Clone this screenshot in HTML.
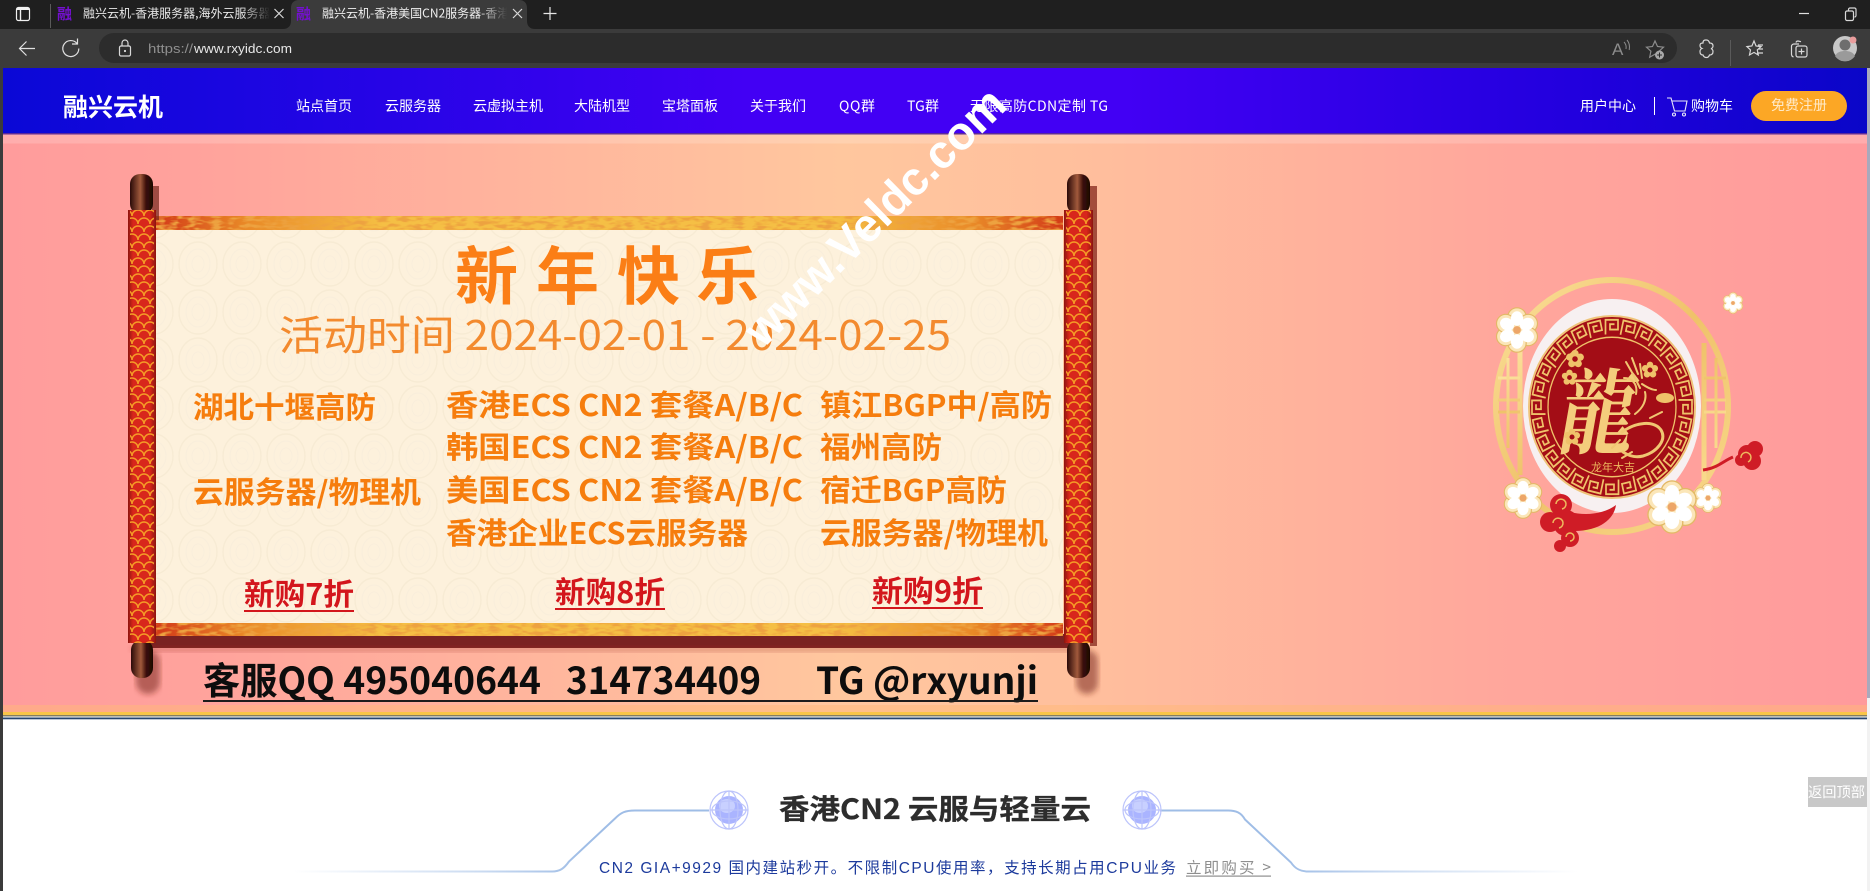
<!DOCTYPE html>
<html lang="zh"><head><meta charset="utf-8"><title>融兴云机</title>
<style>
html,body{margin:0;padding:0;background:#fff;width:1870px;height:891px;overflow:hidden}
svg{position:absolute;left:0;top:0;display:block;filter:blur(.3px)}
text{font-family:"Liberation Sans","Noto Sans CJK SC",sans-serif}
.n{font-family:"Noto Sans CJK SC","Liberation Sans",sans-serif}
.nav{fill:#fff;font-size:14px;font-family:"Noto Sans CJK SC",sans-serif}
.o{fill:#f67d10;font-weight:700;font-size:30px;font-family:"Noto Sans CJK SC",sans-serif}
.r{fill:#d3131d;font-weight:700;font-size:30px;font-family:"Noto Sans CJK SC",sans-serif}
.k{fill:#0a0a0a;font-weight:700;font-size:37px;font-family:"Noto Sans CJK SC",sans-serif}
.ic{fill:none;stroke:#d8d8d8;stroke-width:1.2}
</style></head><body>
<svg width="1870" height="891" viewBox="0 0 1870 891" xmlns="http://www.w3.org/2000/svg">
<defs>
<linearGradient id="hd" x1="0" x2="1" y1="0" y2="0"><stop offset="0" stop-color="#0a08d6"/><stop offset=".12" stop-color="#1a06e0"/><stop offset=".4" stop-color="#4200f4"/><stop offset=".6" stop-color="#4200f4"/><stop offset=".85" stop-color="#2100dd"/><stop offset="1" stop-color="#0a06c8"/></linearGradient>
<linearGradient id="bn" x1="0" x2="1" y1="0" y2="0"><stop offset="0" stop-color="#ff9c9c"/><stop offset=".1" stop-color="#ffa29c"/><stop offset=".45" stop-color="#ffc79e"/><stop offset=".58" stop-color="#ffbf9d"/><stop offset=".8" stop-color="#ffa79c"/><stop offset="1" stop-color="#ff9a9c"/></linearGradient>
<linearGradient id="gl" x1="0" x2="1" y1="0" y2="0"><stop offset="0" stop-color="#9fbde6" stop-opacity="0"/><stop offset=".45" stop-color="#9fbde6" stop-opacity=".55"/><stop offset=".7" stop-color="#9fbde6"/></linearGradient>
<linearGradient id="gr" x1="0" x2="1" y1="0" y2="0"><stop offset=".3" stop-color="#9fbde6"/><stop offset=".55" stop-color="#9fbde6" stop-opacity=".55"/><stop offset="1" stop-color="#9fbde6" stop-opacity="0"/></linearGradient>
<linearGradient id="band" x1="0" x2="1" y1="0" y2="0"><stop offset="0" stop-color="#d33a18"/><stop offset=".1" stop-color="#e98a28"/><stop offset=".25" stop-color="#f5bf44"/><stop offset=".75" stop-color="#f5bf44"/><stop offset=".9" stop-color="#e98a28"/><stop offset="1" stop-color="#d33a18"/></linearGradient>
<linearGradient id="rod" x1="0" x2="1" y1="0" y2="0"><stop offset="0" stop-color="#8c1610"/><stop offset=".18" stop-color="#d8261a"/><stop offset=".78" stop-color="#d8261a"/><stop offset="1" stop-color="#8c1610"/></linearGradient>
<linearGradient id="cap" x1="0" x2="1" y1="0" y2="0"><stop offset="0" stop-color="#2a0a08"/><stop offset=".45" stop-color="#a15a3c"/><stop offset=".7" stop-color="#3a0d08"/><stop offset="1" stop-color="#1c0605"/></linearGradient>
<linearGradient id="gold" x1="0" x2="1" y1="0" y2="1"><stop offset="0" stop-color="#fbe09a"/><stop offset=".5" stop-color="#efc26a"/><stop offset="1" stop-color="#f9d98c"/></linearGradient>
<linearGradient id="fade" x1="0" x2="1"><stop offset="0" stop-color="#fff"/><stop offset=".85" stop-color="#fff"/><stop offset="1" stop-color="#fff" stop-opacity="0"/></linearGradient>
<mask id="m1"><rect x="80" y="0" width="190" height="29" fill="url(#fade)"/></mask>
<mask id="m2"><rect x="320" y="0" width="187" height="29" fill="url(#fade)"/></mask>
<pattern id="paper" width="44" height="48" patternUnits="userSpaceOnUse"><ellipse cx="22" cy="24" rx="19" ry="22" fill="none" stroke="#f7ebd4" stroke-width="1.4"/><ellipse cx="22" cy="24" rx="12" ry="15" fill="none" stroke="#f9eedb" stroke-width="1.2"/><ellipse cx="22" cy="24" rx="6" ry="8" fill="none" stroke="#f9eedb"/></pattern>
<pattern id="wave" width="12" height="16" patternUnits="userSpaceOnUse"><path d="M0 8a6 6 0 0 1 12 0M-6 16a6 6 0 0 1 12 0M6 16a6 6 0 0 1 12 0" fill="none" stroke="#f49a28" stroke-width="1.500"/></pattern>
<filter id="noise" x="0" y="0" width="100%" height="100%"><feTurbulence type="fractalNoise" baseFrequency=".09 .28" numOctaves="2" seed="4"/><feColorMatrix values="0 0 0 0 .85  0 0 0 0 .36  0 0 0 0 .05  0 0 0 4 -1.7"/></filter>
<filter id="b1"><feGaussianBlur stdDeviation=".3"/></filter>
<filter id="b3"><feGaussianBlur stdDeviation="3"/></filter>
<radialGradient id="pt"><stop offset="0" stop-color="#fbe6cc"/><stop offset=".6" stop-color="#fff"/><stop offset="1" stop-color="#fff"/></radialGradient>
<symbol id="fl" viewBox="-30 -30 60 60"><g fill="#fbe6b8" stroke="#e3b866" stroke-width="1.500"><circle cx="0" cy="-17" r="12"/><circle cx="14.700" cy="-8.500" r="12"/><circle cx="14.700" cy="8.500" r="12"/><circle cx="0" cy="17" r="12"/><circle cx="-14.700" cy="8.500" r="12"/><circle cx="-14.700" cy="-8.500" r="12"/></g><circle r="16" fill="#fbe6b8"/><g fill="#fff"><ellipse cx="0" cy="-15" rx="8" ry="9.500"/><ellipse cx="13" cy="-7.500" rx="8" ry="9.500" transform="rotate(60 13 -7.500)"/><ellipse cx="13" cy="7.500" rx="8" ry="9.500" transform="rotate(120 13 7.500)"/><ellipse cx="0" cy="15" rx="8" ry="9.500"/><ellipse cx="-13" cy="7.500" rx="8" ry="9.500" transform="rotate(60 -13 7.500)"/><ellipse cx="-13" cy="-7.500" rx="8" ry="9.500" transform="rotate(120 -13 -7.500)"/></g><circle r="5" fill="#eda668"/></symbol>
<symbol id="sf" viewBox="-12 -12 24 24"><g fill="#efc26a"><circle cy="-6" r="4"/><circle cx="5.700" cy="-2" r="4"/><circle cx="3.500" cy="5" r="4"/><circle cx="-3.500" cy="5" r="4"/><circle cx="-5.700" cy="-2" r="4"/></g><circle r="3" fill="#a30d13"/></symbol>
<symbol id="globe" viewBox="-20 -20 40 40"><circle r="14" fill="#aab4ff"/><ellipse cx="-2" cy="-4" rx="8" ry="7" fill="#c8d0ff"/><g fill="none" stroke="#bcc4fb" stroke-width="1.200"><ellipse rx="19" ry="19"/><ellipse rx="17" ry="9"/><ellipse rx="9" ry="19"/><path d="M-19 0H19M0-19V19"/></g></symbol>
<path id="km" d="M-6.500-66.500V-80H6V-71H-2V-76H2.500" fill="none" stroke="#efc26a" stroke-width="1.700"/>
</defs>

<!-- browser chrome -->
<rect width="1870" height="29" fill="#1f1f1f"/>
<rect y="29" width="1870" height="39" fill="#3b3b3b"/>
<rect x="0" y="68" width="3" height="823" fill="#3b3b3b"/>
<path d="M283 29c5 0 8-3 8-8V8c0-5 3-8 8-8h220c5 0 8 3 8 8v13c0 5 3 8 8 8z" fill="#3b3b3b"/>
<rect x="99" y="33" width="1578" height="30" rx="15" fill="#2c2c2c"/>
<g fill="none" stroke="#f0f0f0" stroke-width="1.200"><rect x="16.500" y="7.500" width="13" height="13" rx="2"/><path d="M16.500 9h13" stroke-width="2"/><path d="M20.500 8v12" stroke-width="1.400"/></g>
<path d="M50.500 4v24" stroke="#5a5a5a"/>
<text x="57" y="19" font-size="15" font-weight="700" fill="#7410d0" class="n">融</text>
<g mask="url(#m1)"><text x="83" y="17.500" font-size="12" fill="#e8e8e8" class="n">融兴云机-香港服务器,海外云服务器服务器</text></g>
<path d="M274.500 9l9 9M283.500 9l-9 9" stroke="#d8d8d8" stroke-width="1.200"/>
<text x="296" y="19" font-size="15" font-weight="700" fill="#7410d0" class="n">融</text>
<g mask="url(#m2)"><text x="322" y="17.500" font-size="12" fill="#f0f0f0" class="n">融兴云机-香港美国CN2服务器-香港服务器</text></g>
<path d="M513 9l9 9M522 9l-9 9" stroke="#d8d8d8" stroke-width="1.200"/>
<path d="M550 7v13M543.500 13.500h13" stroke="#e6e6e6" stroke-width="1.200"/>
<path d="M1799 13.500h10" stroke="#e0e0e0" stroke-width="1.200"/>
<g class="ic"><rect x="1845.500" y="11" width="8" height="9.500" rx="1.500"/><path d="M1848.500 10.500V9.500a1.500 1.500 0 0 1 1.500-1.500h4.500a1.500 1.500 0 0 1 1.500 1.500v6a1.500 1.500 0 0 1-1.500 1.500"/></g>
<path d="M35 48.500H20M26.500 41.500l-7 7 7 7" fill="none" stroke="#e0e0e0" stroke-width="1.200"/>
<path d="M77 43.500a8 8 0 1 0 1.800 5M77.500 38.500v5.500h-5.500" fill="none" stroke="#e0e0e0" stroke-width="1.200"/>
<g class="ic"><rect x="119.500" y="46" width="11" height="10" rx="1.500"/><path d="M122 46v-3a3 3 0 0 1 6 0v3"/></g><circle cx="125" cy="51" r="1.100" fill="#ddd"/>
<text x="148" y="53" font-size="13" fill="#8f8f8f" textLength="45" lengthAdjust="spacingAndGlyphs">https://</text>
<text x="194" y="53" font-size="13" fill="#e8e8e8" textLength="98" lengthAdjust="spacingAndGlyphs">www.rxyidc.com</text>
<text x="1612" y="55" font-size="17" fill="#8c8c8c" font-weight="400">A</text>
<path d="M1624 42c2 2 2.500 4 2 7M1627 40c2.500 3 3 6 2.200 10" fill="none" stroke="#8c8c8c"/>
<path d="M1655 41l2.500 5.500 6 .7-4.400 4 1.200 6-5.300-3-5.300 3 1.200-6-4.400-4 6-.7z" fill="none" stroke="#8c8c8c" stroke-width="1.200"/>
<circle cx="1659.500" cy="55" r="4.500" fill="#a8a8a8"/><path d="M1659.500 52.500v5M1657 55h5" stroke="#2c2c2c"/>
<path class="ic" d="M1703 43c0-2 1-3 2.500-3h1c1.500 0 2.500 1 3 3 2 0 3.500 1 3.500 3 0 1.500-1 2.500-2 2.500 1 .5 2 1.500 2 3 0 2.500-1.500 3.500-3.500 3.500-.5 1.500-1.500 2.500-3 2.500s-3-1-3.500-2.500c-2 0-3-1.500-3-3.500 0-1.500.7-2.500 2-3-1.300-.5-2-1.500-2-3 0-1.500.5-2.500 3-2.500z"/>
<path d="M1730.500 40v26" stroke="#5a5a5a"/>
<path class="ic" d="M1754 41l2 5 5 .6-3.700 3.400 1 5-4.300-2.600-4.500 2.600 1-5-3.600-3.400 5-.6zM1758 45h5M1759 49h4M1757 53h6"/>
<g class="ic"><path d="M1799 44h-5a2.500 2.500 0 0 0-2.500 2.500V54a3 3 0 0 0 2 3"/><path d="M1796 42.500a2 2 0 0 1 2-1.500l3 .7"/><rect x="1796" y="46" width="11" height="11" rx="2"/><path d="M1801.500 48.500v6M1798.500 51.500h6"/></g>
<circle cx="1845" cy="48" r="12" fill="#c8c8c8"/><circle cx="1845" cy="45" r="5.500" fill="#6e6e6e"/><path d="M1835 56c2-4 6-5 10-5s8 1 10 5a12 12 0 0 1-20 0z" fill="#9a9a9a"/>
<circle cx="1853" cy="40" r="3.500" fill="#e89c9c"/>

<!-- page header -->
<rect x="3" y="68" width="1864" height="65" fill="url(#hd)"/>
<text x="63" y="116" font-size="25" font-weight="700" fill="#fff" class="n">融兴云机</text>
<text class="nav" x="296" y="111">站点首页</text>
<text class="nav" x="385" y="111">云服务器</text>
<text class="nav" x="473" y="111">云虚拟主机</text>
<text class="nav" x="574" y="111">大陆机型</text>
<text class="nav" x="662" y="111">宝塔面板</text>
<text class="nav" x="750" y="111">关于我们</text>
<text class="nav" x="839" y="111" textLength="36">QQ群</text>
<text class="nav" x="907" y="111" textLength="32">TG群</text>
<text class="nav" x="970" y="111" textLength="138">无限高防CDN定制 TG</text>
<text class="nav" x="1580" y="111">用户中心</text>
<path d="M1654.500 97v18" stroke="#fff"/>
<g fill="none" stroke="#e8e8f8" stroke-width="1.100"><path d="M1667 98h4l3.500 13h10.500l2-10h-15"/><circle cx="1674" cy="114.500" r="1.500"/><circle cx="1684" cy="114.500" r="1.500"/></g>
<text class="nav" x="1691" y="111">购物车</text>
<rect x="1751" y="91" width="96" height="30" rx="15" fill="#fca725"/>
<text x="1771" y="110" font-size="14" fill="#ffeac8" class="n">免费注册</text>

<!-- banner -->
<rect x="3" y="133" width="1864" height="579" fill="url(#bn)"/>
<rect x="3" y="133" width="1864" height="1.500" fill="#5b2a9a"/>
<rect x="3" y="134.500" width="1864" height="9" fill="#fff" opacity=".18"/>
<rect x="3" y="705" width="1864" height="7" fill="#ffb878" opacity=".5"/>
<rect x="3" y="712" width="1864" height="3" fill="#f9c548"/>
<rect x="3" y="715" width="1864" height="1.500" fill="#857f62"/>
<rect x="3" y="717.500" width="1864" height="1.800" fill="#26456f"/>

<g filter="url(#b1)">
 <!-- scroll -->
 <rect x="134" y="634" width="950" height="14" fill="#7a2020"/>
 <rect x="132" y="646" width="955" height="6" fill="#a03a30" opacity=".3" filter="url(#b3)"/>
 <rect x="136" y="650" width="24" height="44" rx="12" fill="#7a2a20" opacity=".55" filter="url(#b3)"/>
 <rect x="1076" y="650" width="22" height="44" rx="11" fill="#7a2a20" opacity=".55" filter="url(#b3)"/>
 <rect x="156" y="216" width="907" height="14" fill="url(#band)"/>
 <rect x="156" y="216" width="907" height="14" filter="url(#noise)"/>
 <rect x="156" y="230" width="907" height="393" fill="#fdf1dc"/>
 <rect x="156" y="230" width="907" height="393" fill="url(#paper)"/>
 <rect x="156" y="623" width="907" height="13" fill="url(#band)"/>
 <rect x="156" y="623" width="907" height="13" filter="url(#noise)"/>
 <!-- left rod -->
 <rect x="152" y="186" width="7" height="34" fill="#6a1a14" opacity=".65"/>
 <rect x="130" y="174" width="23" height="40" rx="10" fill="url(#cap)"/>
 <rect x="131" y="640" width="22" height="38" rx="10" fill="url(#cap)"/>
 <rect x="128" y="210" width="28" height="433" fill="url(#rod)"/>
 <rect x="130" y="210" width="24" height="433" fill="url(#wave)"/>
 <!-- right rod -->
 <rect x="1090" y="186" width="7" height="460" fill="#7a1a14" opacity=".7"/>
 <rect x="1067" y="174" width="23" height="40" rx="10" fill="url(#cap)"/>
 <rect x="1067" y="640" width="23" height="38" rx="10" fill="url(#cap)"/>
 <rect x="1064" y="210" width="29" height="433" fill="url(#rod)"/>
 <rect x="1066" y="210" width="25" height="433" fill="url(#wave)"/>

 <!-- scroll text -->
 <g class="n" fill="#fb7e12" font-weight="700" font-size="63"><text x="455" y="299">新</text><text x="536" y="299">年</text><text x="617" y="299">快</text><text x="696" y="299">乐</text></g>
 <text x="279" y="350" font-size="41" fill="#f38a2e" class="n" textLength="672" lengthAdjust="spacingAndGlyphs">活动时间 2024-02-01 - 2024-02-25</text>
 <text class="o" x="193" y="418" textLength="183" lengthAdjust="spacingAndGlyphs">湖北十堰高防</text>
 <text class="o" x="193" y="503" textLength="228" lengthAdjust="spacingAndGlyphs">云服务器/物理机</text>
 <text class="o" x="446" y="416" textLength="357" lengthAdjust="spacingAndGlyphs">香港ECS CN2 套餐A/B/C</text>
 <text class="o" x="446" y="458" textLength="357" lengthAdjust="spacingAndGlyphs">韩国ECS CN2 套餐A/B/C</text>
 <text class="o" x="446" y="501" textLength="357" lengthAdjust="spacingAndGlyphs">美国ECS CN2 套餐A/B/C</text>
 <text class="o" x="446" y="544" textLength="302" lengthAdjust="spacingAndGlyphs">香港企业ECS云服务器</text>
 <text class="o" x="820" y="416" textLength="232" lengthAdjust="spacingAndGlyphs">镇江BGP中/高防</text>
 <text class="o" x="820" y="458" textLength="122" lengthAdjust="spacingAndGlyphs">福州高防</text>
 <text class="o" x="820" y="501" textLength="187" lengthAdjust="spacingAndGlyphs">宿迁BGP高防</text>
 <text class="o" x="820" y="544" textLength="228" lengthAdjust="spacingAndGlyphs">云服务器/物理机</text>
 <text class="r" x="244" y="605" textLength="110" lengthAdjust="spacingAndGlyphs">新购7折</text>
 <rect x="244" y="610" width="110" height="2" fill="#d3131d"/>
 <text class="r" x="555" y="603" textLength="110" lengthAdjust="spacingAndGlyphs">新购8折</text>
 <rect x="555" y="608" width="110" height="2" fill="#d3131d"/>
 <text class="r" x="872" y="602" textLength="111" lengthAdjust="spacingAndGlyphs">新购9折</text>
 <rect x="872" y="607" width="111" height="2" fill="#d3131d"/>
 <text class="k" x="203" y="694" textLength="338" lengthAdjust="spacingAndGlyphs">客服QQ 495040644</text>
 <text class="k" x="566" y="694" textLength="195" lengthAdjust="spacingAndGlyphs">314734409</text>
 <text class="k" x="816" y="694" textLength="222" lengthAdjust="spacingAndGlyphs">TG @rxyunji</text>
 <rect x="203" y="700" width="835" height="2" fill="#1c1c1c"/>

 <!-- dragon medallion -->
 <g>
  <ellipse cx="1612" cy="406" rx="116" ry="126" fill="none" stroke="url(#gold)" stroke-width="6"/>
  <ellipse cx="1612" cy="406" rx="89" ry="107" fill="#f7f0f1"/>
  <g fill="none" stroke="url(#gold)" stroke-width="5"><path d="M1520 345v130M1704 343v137"/><path d="M1498 400h22M1498 412h22M1704 400h22M1704 412h22M1498 378h22M1704 378h22" stroke-width="3"/><path d="M1508 358v90M1716 358v90" stroke-width="3"/></g>
  <ellipse cx="1612" cy="407" rx="84" ry="92" fill="#efc47a"/>
  <ellipse cx="1612" cy="407" rx="82" ry="90" fill="#a30d13"/>
  <g transform="translate(1612 407) scale(1 1.090)">
   <circle r="64" fill="none" stroke="#efc26a" stroke-width="1.300"/>
   <use href="#km"/><use href="#km" transform="rotate(12.860)"/><use href="#km" transform="rotate(25.710)"/><use href="#km" transform="rotate(38.570)"/><use href="#km" transform="rotate(51.430)"/><use href="#km" transform="rotate(64.290)"/><use href="#km" transform="rotate(77.140)"/><use href="#km" transform="rotate(90)"/><use href="#km" transform="rotate(102.860)"/><use href="#km" transform="rotate(115.710)"/><use href="#km" transform="rotate(128.570)"/><use href="#km" transform="rotate(141.430)"/><use href="#km" transform="rotate(154.290)"/><use href="#km" transform="rotate(167.140)"/><use href="#km" transform="rotate(180)"/><use href="#km" transform="rotate(192.860)"/><use href="#km" transform="rotate(205.710)"/><use href="#km" transform="rotate(218.570)"/><use href="#km" transform="rotate(231.430)"/><use href="#km" transform="rotate(244.290)"/><use href="#km" transform="rotate(257.140)"/><use href="#km" transform="rotate(270)"/><use href="#km" transform="rotate(282.860)"/><use href="#km" transform="rotate(295.710)"/><use href="#km" transform="rotate(308.570)"/><use href="#km" transform="rotate(321.430)"/><use href="#km" transform="rotate(334.290)"/><use href="#km" transform="rotate(347.140)"/>
  </g>
  <text transform="translate(1556 446) skewX(-10) scale(.85 1.050)" font-size="88" font-weight="700" fill="#f4cd7b" style='font-family:"Noto Serif CJK SC",serif'>龍</text>
  <g fill="none" stroke="#f0c672" stroke-width="2" stroke-linecap="round">
   <path d="M1622 432c14-10 32-12 39-2 6 10-4 22-18 26-8 2-14 0-20-4" stroke-width="3"/>
   <path d="M1626 362l8 14 6 12M1632 358l6 16M1640 364l2 14M1624 378c8 0 14 6 12 16M1642 384c6 4 10 6 14 6M1645 392c2 8-2 16-10 22"/>
   <path d="M1620 440l-8 8M1632 452l-10 6M1650 418l12-6"/>
  </g>
  <use href="#sf" x="1564" y="348" width="22" height="22"/><use href="#sf" x="1560" y="368" width="19" height="19"/><use href="#sf" x="1640" y="360" width="20" height="20"/><use href="#sf" x="1562" y="427" width="20" height="20"/>
  <ellipse cx="1665" cy="398" rx="9" ry="5" fill="#efc26a"/>
  <text x="1613" y="471" text-anchor="middle" font-size="11" fill="#eeb95e" class="n">龙年大吉</text>
  <use href="#fl" x="1693" y="483" width="30" height="30"/>
  <use href="#fl" x="1494" y="307" width="46" height="46"/>
  <use href="#fl" x="1722" y="292" width="22" height="22"/>
  <use href="#fl" x="1502" y="477" width="42" height="42"/>
  <use href="#fl" x="1645" y="480" width="54" height="54"/>
  <!-- clouds -->
  <g fill="#cf1f26"><circle cx="1561" cy="505" r="11"/><circle cx="1550" cy="522" r="10"/><circle cx="1566" cy="523" r="13"/><circle cx="1570" cy="538" r="9"/><circle cx="1560" cy="546" r="6"/><path d="M1570 512c16 4 34 2 46-7-2 14-16 26-42 26z"/></g>
  <g fill="none" stroke="#eeb95e" stroke-width="1.500"><path d="M1556 504a5 5 0 1 1 6 5M1553 523a5 5 0 1 1 6 5M1566 537a4 4 0 1 1 4 4"/></g>
  <path d="M1703 470c15-2 20-9 30-13" fill="none" stroke="#cf1f26" stroke-width="3"/>
  <g fill="#cf1f26"><circle cx="1747" cy="454" r="9"/><circle cx="1755" cy="449" r="8"/><circle cx="1752" cy="461" r="9"/><circle cx="1741" cy="460" r="6"/></g>
  <path d="M1741 458a5 5 0 1 1 7 4" fill="none" stroke="#eeb95e" stroke-width="1.500"/>
 </g>
</g>

<!-- watermark -->
<text x="0" y="0" transform="translate(763 349) rotate(-44.500)" font-size="47" font-weight="700" fill="#fff" textLength="345" lengthAdjust="spacingAndGlyphs">www.Veldc.com</text>

<!-- scrollbar -->
<rect x="1867" y="68" width="3" height="630" fill="#a9a9bc"/>
<rect x="1867" y="698" width="3" height="193" fill="#f2f2f2"/>

<!-- section -->
<path d="M293 871.500H552c8 0 12-3 17-10l46-43c6-6 10-8 20-8H709" fill="none" stroke="url(#gl)" stroke-width="2"/>
<path d="M1160 810.500h68c8 0 13 2 17 9l46 43c4 6 9 9 17 9H1577" fill="none" stroke="url(#gr)" stroke-width="2"/>
<use href="#globe" x="709" y="790" width="40" height="40"/>
<use href="#globe" x="1122" y="790" width="40" height="40"/>
<text x="779" y="819" font-size="28" font-weight="700" fill="#2d2d2d" class="n" textLength="312" lengthAdjust="spacingAndGlyphs" stroke="#2d2d2d" stroke-width=".3">香港CN2 云服与轻量云</text>
<text x="599" y="873" font-size="15.500" fill="#1c3a9c" textLength="577" lengthAdjust="spacing">CN2 GIA+9929 国内建站秒开。不限制CPU使用率，支持长期占用CPU业务</text>
<text x="1186" y="873" font-size="15.500" fill="#8f8f8f" class="n" textLength="85" lengthAdjust="spacing">立即购买 &gt;</text>
<rect x="1186" y="875.500" width="85" height="1.200" fill="#8f8f8f"/>
<rect x="1808" y="777" width="59" height="30" fill="#c8c8c8"/>
<text x="1808" y="797" font-size="14" fill="#fff" class="n" textLength="57" lengthAdjust="spacingAndGlyphs">返回顶部</text>
</svg>
</body></html>
